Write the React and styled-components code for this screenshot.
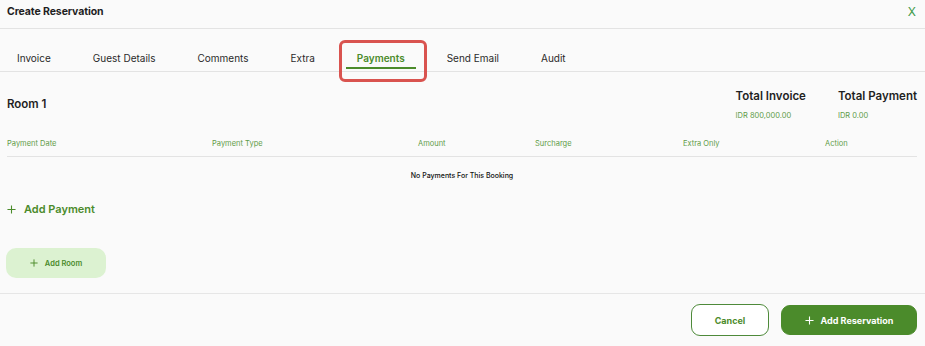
import React from "react";
import styled, { createGlobalStyle } from "styled-components";

const Global = createGlobalStyle`
  html, body { margin: 0; padding: 0; background: #fafafa; }
  body { font-family: Inter, "Open Sans", sans-serif; color: #1f1f1f; }
  * { box-sizing: border-box; }
`;

const GREEN = "#4b8b2b";
const LIGHT_GREEN = "#5f9c48";

const Page = styled.div`
  width: 925px;
  height: 346px;
  display: flex;
  flex-direction: column;
  background: #fafafa;
  overflow: hidden;
`;

const Header = styled.div`
  height: 29px;
  display: flex;
  align-items: center;
  justify-content: space-between;
  padding: 0 9px 6px 7px;
  border-bottom: 1px solid #e3e3e3;
`;

const Title = styled.div`
  font-size: 10.5px;
  font-weight: 700;
  letter-spacing: -0.1px;
`;

const Close = styled.button`
  border: none;
  background: none;
  padding: 0;
  color: #3f9a4a;
  font-family: inherit;
  font-size: 12px;
  cursor: pointer;
`;

const TabList = styled.div`
  display: flex;
  margin-top: 12px;
  padding-left: 6px;
  gap: 20px;
  border-bottom: 1px solid #e3e3e3;
`;

const Tab = styled.div`
  position: relative;
  height: 30px;
  padding: 4px 11px 0;
  display: flex;
  align-items: center;
  font-size: 10px;
  font-weight: ${(p) => (p.$active ? 600 : 400)};
  color: ${(p) => (p.$active ? GREEN : "#2a2a2a")};
  &::before {
    content: "";
    display: ${(p) => (p.$active ? "block" : "none")};
    position: absolute;
    left: 0;
    right: 0;
    bottom: 2px;
    height: 2px;
    background: ${GREEN};
  }
  &::after {
    content: "";
    display: ${(p) => (p.$highlight ? "block" : "none")};
    position: absolute;
    top: -1px;
    bottom: -11px;
    left: -7px;
    right: -11px;
    border: 3px solid #d9534f;
    border-radius: 6px;
  }
`;

const Section = styled.div`
  padding: 0 8px 0 7px;
`;

const RoomHeader = styled.div`
  display: flex;
  justify-content: space-between;
  align-items: flex-start;
  padding-top: 17px;
`;

const RoomTitle = styled.div`
  font-size: 11.5px;
  font-weight: 600;
  margin-top: 8px;
`;

const Totals = styled.div`
  display: flex;
  gap: 32px;
`;

const TotalBlock = styled.div`
  display: flex;
  flex-direction: column;
  gap: 8px;
`;

const TotalLabel = styled.div`
  font-size: 11.5px;
  font-weight: 600;
`;

const TotalValue = styled.div`
  font-size: 7.5px;
  color: ${LIGHT_GREEN};
`;

const TableHead = styled.div`
  display: grid;
  grid-template-columns: 205px 206px 117px 148px 142px 1fr;
  margin-top: 19px;
  padding-bottom: 8px;
  border-bottom: 1px solid #e3e3e3;
`;

const HeadCell = styled.div`
  font-size: 7.5px;
  color: ${LIGHT_GREEN};
`;

const Empty = styled.div`
  text-align: center;
  font-size: 7px;
  font-weight: 500;
  color: #111;
  padding-top: 14px;
`;

const AddLink = styled.button`
  display: flex;
  align-items: center;
  gap: 8px;
  margin-top: 22px;
  border: none;
  background: none;
  padding: 0;
  font-family: inherit;
  font-size: 11px;
  font-weight: 600;
  color: ${GREEN};
  cursor: pointer;
`;

const AddRoom = styled.button`
  display: flex;
  align-items: center;
  justify-content: center;
  gap: 7px;
  width: 100px;
  height: 30px;
  margin: 32px 0 0 -1px;
  border: none;
  border-radius: 10px;
  background: #dcf2d1;
  font-family: inherit;
  font-size: 7.5px;
  font-weight: 600;
  color: ${GREEN};
`;

const Footer = styled.div`
  margin-top: auto;
  height: 53px;
  border-top: 1px solid #e6e6e6;
  display: flex;
  justify-content: flex-end;
  align-items: center;
  gap: 12px;
  padding: 0 8px 0 0;
`;

const Button = styled.button`
  height: ${(p) => (p.$primary ? "30px" : "32px")};
  width: ${(p) => p.$w}px;
  border-radius: 9px;
  border: 1px solid ${(p) => (p.$primary ? GREEN : "#4e8a3a")};
  background: ${(p) => (p.$primary ? GREEN : "#fff")};
  color: ${(p) => (p.$primary ? "#fff" : GREEN)};
  font-family: inherit;
  font-size: 9px;
  font-weight: 700;
  display: flex;
  align-items: center;
  justify-content: center;
  gap: 7px;
`;

const Plus = ({ size = 10 }) => (
  <svg width={size} height={size} viewBox="0 0 10 10" fill="none">
    <path d="M5 0.5V9.5M0.5 5H9.5" stroke="currentColor" strokeWidth="1.2" />
  </svg>
);

const tabs = ["Invoice", "Guest Details", "Comments", "Extra", "Payments", "Send Email", "Audit"];
const cols = ["Payment Date", "Payment Type", "Amount", "Surcharge", "Extra Only", "Action"];

export default function App() {
  return (
    <Page>
      <Global />
      <Header>
        <Title>Create Reservation</Title>
        <Close>X</Close>
      </Header>
      <TabList>
        {tabs.map((t) => (
          <Tab key={t} $active={t === "Payments"} $highlight={t === "Payments"}>
            {t}
          </Tab>
        ))}
      </TabList>
      <Section>
        <RoomHeader>
          <RoomTitle>Room 1</RoomTitle>
          <Totals>
            <TotalBlock>
              <TotalLabel>Total Invoice</TotalLabel>
              <TotalValue>IDR 800,000.00</TotalValue>
            </TotalBlock>
            <TotalBlock>
              <TotalLabel>Total Payment</TotalLabel>
              <TotalValue>IDR 0.00</TotalValue>
            </TotalBlock>
          </Totals>
        </RoomHeader>
        <TableHead>
          {cols.map((c) => (
            <HeadCell key={c}>{c}</HeadCell>
          ))}
        </TableHead>
        <Empty>No Payments For This Booking</Empty>
        <AddLink>
          <Plus size={9} />
          Add Payment
        </AddLink>
        <AddRoom>
          <Plus size={8} />
          Add Room
        </AddRoom>
      </Section>
      <Footer>
        <Button $w={78}>Cancel</Button>
        <Button $primary $w={136}>
          <Plus size={9} />
          Add Reservation
        </Button>
      </Footer>
    </Page>
  );
}
